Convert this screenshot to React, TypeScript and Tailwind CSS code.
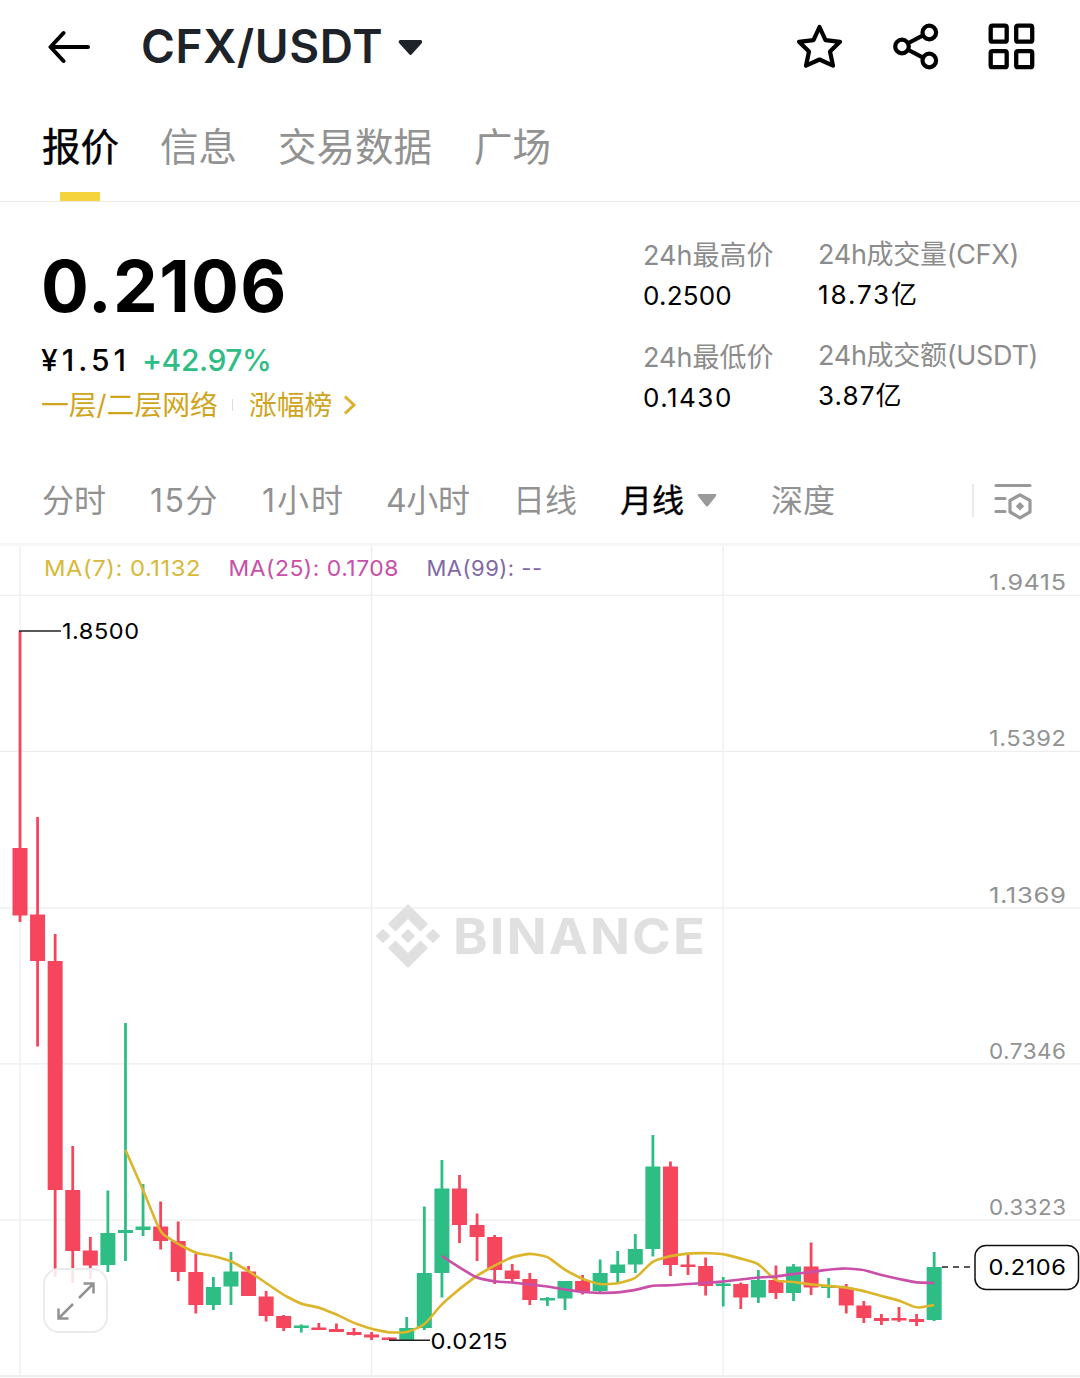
import type { ReactNode } from "react"

interface Candle {
  up: boolean
  top: number
  bottom: number
  high: number
  low: number
}

const GREEN = "#2ebd85"
const RED = "#f6465d"
const GOLD = "#dcb52a"
const PINK = "#c94fa9"

const CHART_TOP = 546
const FIRST_X = 20
const STEP = 17.58

const c = (side: "up" | "down", top: number, bottom: number, high: number, low: number): Candle => ({
  up: side === "up",
  top,
  bottom,
  high,
  low,
})

const candles: Candle[] = [
  c("down", 848, 915.5, 631, 922),
  c("down", 914.5, 961, 817, 1046.5),
  c("down", 961, 1190, 934, 1277),
  c("down", 1190, 1251, 1146, 1283),
  c("down", 1250.5, 1265.5, 1237, 1279),
  c("up", 1233, 1265, 1190.5, 1272),
  c("up", 1230, 1233, 1023, 1261),
  c("up", 1226.5, 1230, 1184, 1236),
  c("down", 1226.5, 1241, 1201.5, 1249.5),
  c("down", 1241, 1272, 1221.5, 1281),
  c("down", 1272, 1305, 1254, 1313.5),
  c("up", 1287, 1305, 1277, 1310),
  c("up", 1271.5, 1286.5, 1252, 1305),
  c("down", 1271.5, 1296, 1266, 1296),
  c("down", 1296.5, 1316, 1291, 1321.5),
  c("down", 1316, 1328, 1315, 1331),
  c("up", 1325.5, 1328, 1324.5, 1332.5),
  c("down", 1327.5, 1330, 1323, 1330),
  c("down", 1329, 1332, 1323.5, 1332),
  c("down", 1332, 1335, 1328, 1335.5),
  c("down", 1334.5, 1337.5, 1332, 1340),
  c("down", 1337.5, 1340, 1337.5, 1340),
  c("up", 1328, 1340, 1317, 1340),
  c("up", 1273, 1328, 1206.5, 1330),
  c("up", 1188.5, 1273, 1160, 1297.5),
  c("down", 1188.5, 1225, 1175, 1243),
  c("down", 1225, 1237, 1213.5, 1261),
  c("down", 1237, 1270, 1235, 1284),
  c("down", 1270.5, 1279, 1264, 1283),
  c("down", 1279, 1300, 1273, 1305),
  c("up", 1298, 1300.5, 1297, 1306),
  c("up", 1281, 1298.5, 1281, 1310),
  c("down", 1281, 1291, 1275, 1294.5),
  c("up", 1273, 1291, 1259.5, 1292),
  c("up", 1264.5, 1273, 1251, 1282),
  c("up", 1249, 1264.5, 1234, 1273),
  c("up", 1166.5, 1249, 1135, 1256.5),
  c("down", 1166.5, 1265, 1161.5, 1276),
  c("down", 1264.5, 1267, 1254.5, 1275),
  c("down", 1266, 1286, 1257.5, 1295.5),
  c("up", 1283.5, 1286, 1277, 1306.5),
  c("down", 1284, 1297.5, 1282.5, 1309),
  c("up", 1280, 1297.5, 1270, 1303),
  c("down", 1280, 1293, 1265.5, 1299),
  c("up", 1266.5, 1293, 1264, 1301),
  c("down", 1266.5, 1287.5, 1242.5, 1295),
  c("up", 1285.5, 1288, 1278, 1298),
  c("down", 1288, 1305.5, 1284, 1313.5),
  c("down", 1305.5, 1318, 1301, 1323),
  c("down", 1318, 1321, 1314, 1325),
  c("down", 1318, 1320.5, 1307, 1322),
  c("down", 1319, 1322, 1314, 1326),
  c("up", 1267, 1320, 1252, 1321),
]

// MA(7) starts at the 7th candle, MA(25) at the 25th
const ma7 = [
  1150, 1190, 1233, 1244, 1253, 1256, 1261, 1271, 1283, 1295, 1304, 1307.5, 1314.5, 1323, 1329, 1332.5, 1332.5,
  1325, 1304, 1289, 1275.5, 1265.5, 1257, 1253.5, 1256.5, 1270, 1279, 1284.5, 1283.5, 1278.5, 1261, 1256, 1253.5,
  1253, 1254, 1258.5, 1263.5, 1281, 1282, 1284.5, 1286, 1287.5, 1291, 1296, 1300.5, 1308, 1305,
]
const ma25 = [
  1256, 1267.5, 1278, 1281.5, 1282.5, 1284.5, 1286.5, 1289.5, 1292, 1293, 1292.5, 1290, 1285.5, 1285.3, 1284,
  1283, 1281.5, 1279.5, 1277.5, 1276.5, 1274, 1272, 1269.5, 1268.3, 1270, 1275, 1279, 1282.5, 1283,
]

const priceLabels = [
  { text: "1.9415", line: 595 },
  { text: "1.5392", line: 751 },
  { text: "1.1369", line: 907.5 },
  { text: "0.7346", line: 1063.5 },
  { text: "0.3323", line: 1219.5 },
]

const candleX = (index: number) => FIRST_X + index * STEP

// Polyline with slightly rounded joints
function linePath(values: number[], start: number) {
  const pts = values.map((y, i) => [candleX(start + i), y])
  let d = `M${pts[0][0]} ${pts[0][1]}`
  for (let i = 1; i < pts.length; i++) {
    const [px, py] = pts[i - 1]
    const [x, y] = pts[i]
    const ax = x - (x - px) * 0.25
    const ay = y - (y - py) * 0.25
    d += ` L${ax} ${ay}`
    if (i < pts.length - 1) {
      const [nx, ny] = pts[i + 1]
      d += ` Q${x} ${y} ${x + (nx - x) * 0.25} ${y + (ny - y) * 0.25}`
    } else {
      d += ` L${x} ${y}`
    }
  }
  return d
}

function Header() {
  return (
    <header className="flex h-[94px] items-center pl-[48px] pr-[44px]">
      <svg width="43" height="34" viewBox="0 0 43 34" fill="none" stroke="#000" strokeWidth="4" strokeLinecap="round" strokeLinejoin="round">
        <path d="M40 17H3M15.500 3L2.500 17L15.500 31" />
      </svg>
      <h1 className="-mt-[2px] ml-[50px] w-[242px] whitespace-nowrap text-[46px] font-semibold leading-none tracking-[0.6px] text-[#1e2329]">
        CFX/USDT
      </h1>
      <svg className="ml-[15px] mt-[1px]" width="25" height="17" viewBox="0 0 25 17" fill="#1e2329">
        <path d="M2 1H23Q25 2 23.500 4.500L14 15Q12.500 17 11 15L1.500 4.500Q-.5 2 2 1Z" />
      </svg>
      <div className="ml-auto flex items-center">
        <svg width="48" height="48" viewBox="0.5 0 48 48" fill="none" stroke="#000" strokeWidth="4.200" strokeLinejoin="round">
          <path d="M24 4L30 17.200L44.500 18.800L34.500 28.500L37.500 42.700L24 36.500L10.500 42.700L13.500 28.500L3.500 18.800L18 17.200Z" />
        </svg>
        <svg className="ml-[48px]" width="48" height="48" viewBox="0.5 0.5 48 48" fill="none" stroke="#000" strokeWidth="4.200">
          <circle cx="10.500" cy="24" r="6.800" />
          <circle cx="37.800" cy="10" r="6.800" />
          <circle cx="37.800" cy="38" r="6.800" />
          <path d="M17 20.500L31.500 12.800M17 27.500L31.500 35.200" />
        </svg>
        <svg className="ml-[48px]" width="48" height="48" viewBox="0 0 48 48" fill="none" stroke="#000" strokeWidth="4.300">
          <rect x="2.700" y="2.700" width="16" height="16" rx="1.800" />
          <rect x="28.200" y="2.700" width="16" height="16" rx="1.800" />
          <rect x="2.700" y="28.200" width="16" height="16" rx="1.800" />
          <rect x="28.200" y="28.200" width="16" height="16" rx="1.800" />
        </svg>
      </div>
    </header>
  )
}

function Tabs() {
  return (
    <nav className="flex h-[108px] border-b border-[#ebebeb] pl-[42px] text-[38.500px] leading-[106px] text-[#929292]">
      <div className="flex w-[118px] flex-col text-black">
        <span className="h-[98px] [-webkit-text-stroke:0.4px_#000]">报价</span>
        <span className="ml-[18px] h-[9px] w-[40px] bg-[#f5d33d]" />
      </div>
      <span className="w-[118px]">信息</span>
      <span className="w-[196px]">交易数据</span>
      <span>广场</span>
    </nav>
  )
}

function Stat({ label, value, className }: { label: ReactNode; value: ReactNode; className?: string }) {
  return (
    <div className={`whitespace-nowrap text-[27px] ${className ?? ""}`}>
      <div className="h-[40px] leading-[40px] text-[#8c8c8c]">{label}</div>
      <div className="h-[40px] text-[26px] leading-[40px] text-black">{value}</div>
    </div>
  )
}

function Summary() {
  return (
    <section className="flex h-[256px] pl-[41px]">
      <div className="w-[602px]">
        <div className="mt-[48px] h-[72px] text-[71px] font-bold leading-[72px] tracking-[1.3px] text-black">0.2106</div>
        <div className="mt-[18px] flex h-[40px] text-[30px] font-medium leading-[40px]">
          <span className="w-[101px] tracking-[4px] text-black">¥1.51</span>
          <span className="tracking-[-0.4px] text-[#2ebd85]">+42.97%</span>
        </div>
        <div className="mt-[5px] flex h-[40px] items-center text-[27.800px] leading-[40px] text-[#d0a51e]">
          <span className="w-[191px]">一层/二层网络</span>
          <span className="h-[12px] w-px bg-[#dddddd]" />
          <span className="ml-[16px] w-[94px]">涨幅榜</span>
          <svg width="14" height="20" viewBox="0 0 14 20" fill="none" stroke="#dcb02c" strokeWidth="3">
            <path d="M2 1.500L11 10L2 18.500" />
          </svg>
        </div>
      </div>
      <div className="w-[175px]">
        <Stat className="mt-[34px]" label="24h最高价" value={<span className="tracking-[0.2px]">0.2500</span>} />
        <Stat className="mt-[22px]" label="24h最低价" value={<span className="tracking-[1.5px]">0.1430</span>} />
      </div>
      <div>
        <Stat
          className="mt-[33px]"
          label={<span className="tracking-[-0.3px]">24h成交量(CFX)</span>}
          value={<span className="tracking-[1.9px]">18.73亿</span>}
        />
        <Stat
          className="mt-[21px]"
          label={<span className="tracking-[-0.3px]">24h成交额(USDT)</span>}
          value={<span className="tracking-[1.1px]">3.87亿</span>}
        />
      </div>
    </section>
  )
}

function Intervals() {
  return (
    <nav className="flex h-[88px] items-center border-b-[3px] border-[#f7f7f7] pl-[42px] text-[32px] text-[#929292]">
      <span className="w-[108px]">分时</span>
      <span className="w-[112px] tracking-[1.5px]">15分</span>
      <span className="w-[124px] tracking-[2px]">1小时</span>
      <span className="w-[127px] tracking-[-0.3px]">4小时</span>
      <span className="w-[107px]">日线</span>
      <span className="w-[77px] text-black [-webkit-text-stroke:0.4px_#000]">月线</span>
      <svg width="20" height="13" viewBox="0 0 20 13" fill="#999">
        <path d="M1.500 0H18.500Q20 .5 19 2L11.500 11.500Q10 13.500 8.500 11.500L1 2Q0 .5 1.500 0Z" />
      </svg>
      <span className="ml-[54px] w-[201px]">深度</span>
      <span className="h-[33px] w-[2px] bg-[#ebebeb]" />
      <svg className="ml-[19px]" width="40" height="38" viewBox="0 0 40 38" fill="none" stroke="#999" strokeWidth="3.200" strokeLinecap="round">
        <path d="M3 3.500H37M3 16.500H12M3 29.500H12" />
        <path d="M27 12.800L37 18.500V30L27 35.800L17 30V18.500Z" strokeLinejoin="round" />
        <path d="M27 20L31.200 24.200L27 28.400L22.800 24.200Z" fill="#999" stroke="none" />
      </svg>
    </nav>
  )
}

function Watermark() {
  return (
    <g fill="#e0e0e0">
      <g transform="translate(408 936)">
        <path d="M0 -32L20 -12L12.500 -4.500L0 -17L-12.500 -4.500L-20 -12Z" />
        <path d="M0 32L20 12L12.500 4.500L0 17L-12.500 4.500L-20 12Z" />
        <path d="M0 -7.300L7.300 0L0 7.300L-7.300 0Z" />
        <path d="M-25 -7.300L-17.700 0L-25 7.300L-32.300 0Z" />
        <path d="M25 -7.300L32.300 0L25 7.300L17.700 0Z" />
      </g>
      <text x="453" y="954" fontSize="49.500" fontWeight="700" letterSpacing="2" textLength="254" lengthAdjust="spacingAndGlyphs">
        BINANCE
      </text>
    </g>
  )
}

interface ChartTextProps {
  x: number
  y: number
  width: number
  fill?: string
  children: string
}

function ChartText({ x, y, width, fill = "#000", children }: ChartTextProps) {
  return (
    <text x={x} y={y} fill={fill} fontSize="22" letterSpacing="0.5" textLength={width} lengthAdjust="spacingAndGlyphs">
      {children}
    </text>
  )
}

function Chart() {
  return (
    <section className="relative h-[832px]">
      <svg className="block" width="1080" height="832" viewBox={`0 ${CHART_TOP} 1080 832`}>
        <g stroke="#eeeeee" strokeWidth="1.300">
          {priceLabels.map((label) => (
            <line key={label.text} x1="0" x2="1080" y1={label.line + 0.3} y2={label.line + 0.3} />
          ))}
          <line x1="0" x2="1080" y1="1376" y2="1376" strokeWidth="2" />
          {[20, 371.700, 723].map((x) => (
            <line key={x} x1={x} x2={x} y1={CHART_TOP} y2="1376" />
          ))}
        </g>

        <Watermark />

        {candles.map((candle, i) => {
          const x = candleX(i)
          return (
            <g key={i} fill={candle.up ? GREEN : RED}>
              <rect x={x - 1.4} y={candle.high} width="2.800" height={candle.low - candle.high} />
              <rect x={x - 7.5} y={candle.top} width="15" height={candle.bottom - candle.top} />
            </g>
          )
        })}

        <g fill="none" strokeWidth="2.600" strokeLinejoin="round">
          <path d={linePath(ma7, 6)} stroke={GOLD} />
          <path d={linePath(ma25, 24)} stroke={PINK} />
        </g>

        <g stroke="#222" strokeWidth="1.600">
          <path d="M19 631H61" />
          <path d="M389 1340.300H430" />
          <path d="M942 1267H972" strokeDasharray="6 5" />
        </g>

        <ChartText x={44} y={576} width={157} fill="#d8b93a">MA(7): 0.1132</ChartText>
        <ChartText x={228.5} y={576} width={170.5} fill={PINK}>MA(25): 0.1708</ChartText>
        <ChartText x={426.5} y={576} width={116} fill="#8168a8">MA(99): --</ChartText>
        <ChartText x={62} y={639} width={77.5}>1.8500</ChartText>
        <ChartText x={430.5} y={1349} width={77.5}>0.0215</ChartText>
        {priceLabels.map((label) => (
          <ChartText key={label.text} x={989} y={label.line - 5} width={77.5} fill="#929292">
            {label.text}
          </ChartText>
        ))}

        <rect x="975" y="1245.500" width="103.500" height="44" rx="11" fill="#fff" stroke="#111" strokeWidth="1.500" />
        <ChartText x={988.5} y={1275} width={78}>0.2106</ChartText>
      </svg>

      <button className="absolute left-[43px] top-[722px] flex size-[65px] items-center justify-center rounded-[16px] border-2 border-[#ebebeb] bg-white/85">
        <svg width="40" height="40" viewBox="0 0 40 40" fill="none" stroke="#929292" strokeWidth="2.500">
          <path d="M23 17L37 3M27.500 2.500H37.500V12.500M17 23L3 37M2.500 27.500V37.500H12.500" />
        </svg>
      </button>
    </section>
  )
}

export default function App() {
  return (
    <main className="h-[1378px] w-[1080px] overflow-hidden bg-white font-[Inter,'Noto_Sans_CJK_SC',sans-serif]">
      <Header />
      <Tabs />
      <Summary />
      <Intervals />
      <Chart />
    </main>
  )
}
